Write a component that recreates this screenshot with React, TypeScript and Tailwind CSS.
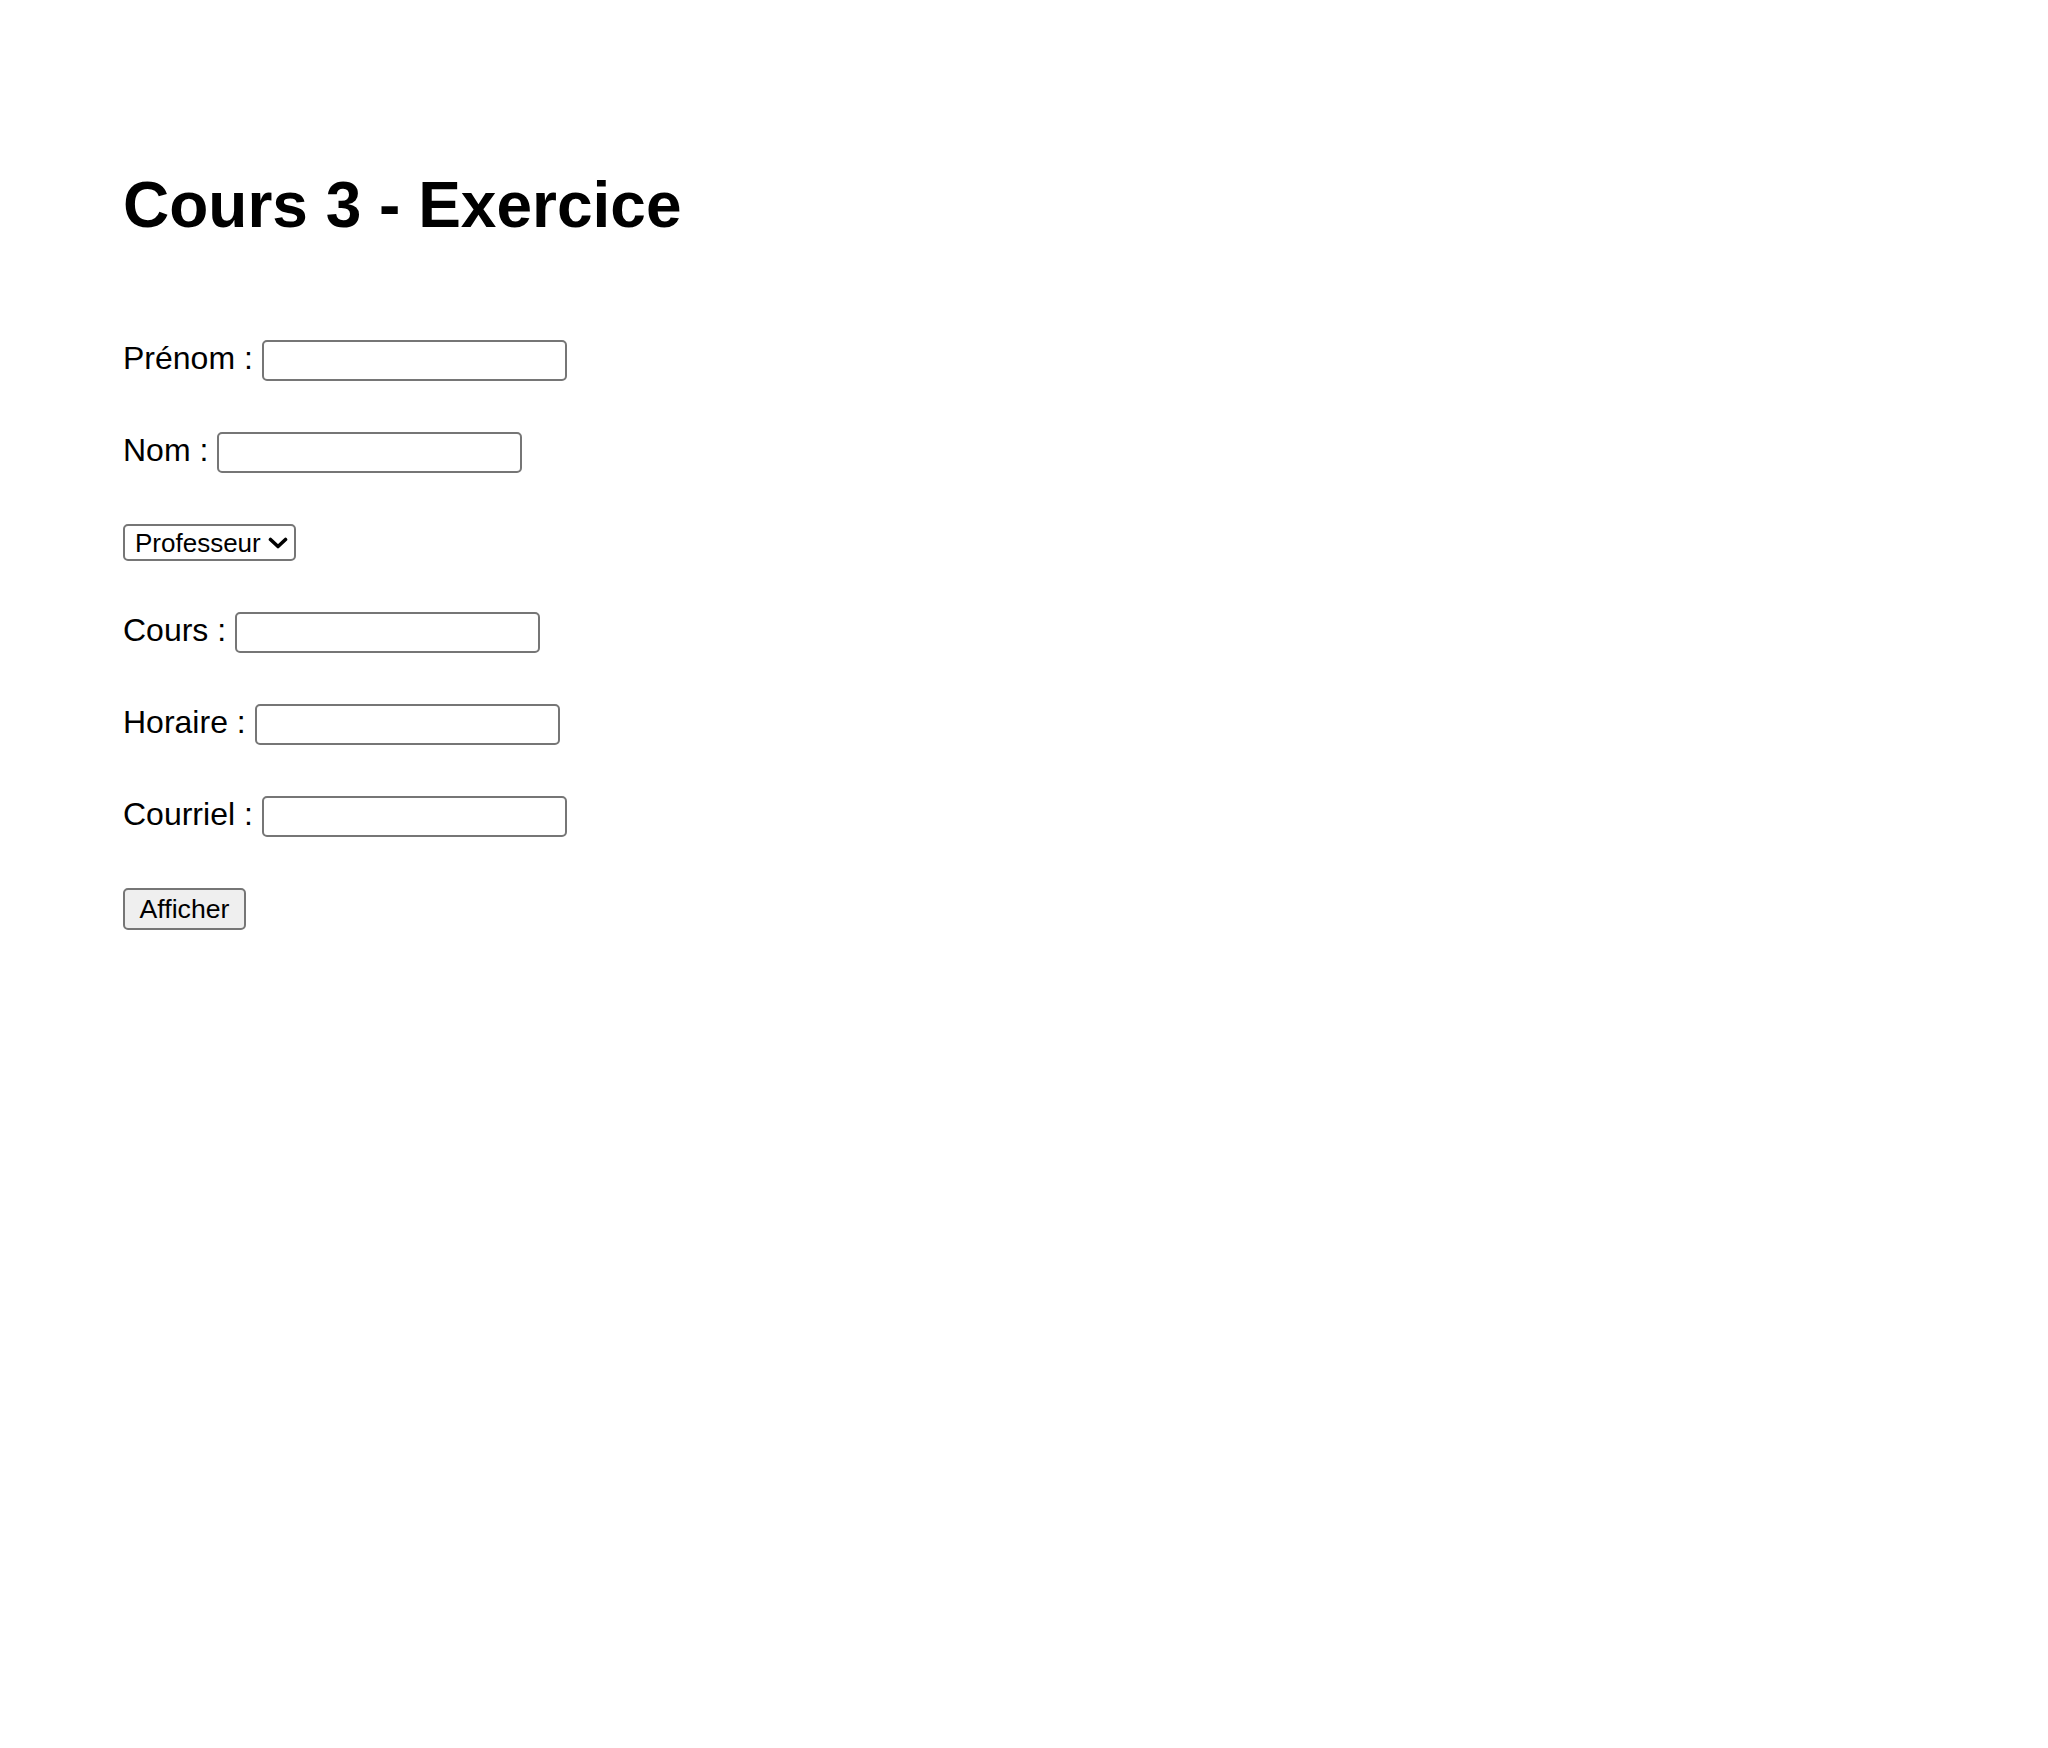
import React from "react";

const fields = ["Prénom", "Nom"];
const fieldsAfter = ["Cours", "Horaire", "Courriel"];

function Field({ label }: { label: string }) {
  return (
    <div className="flex items-start gap-[9px]">
      <label className="text-[32px] leading-[30px] pt-[3px]">{label} :</label>
      <input
        type="text"
        className="h-[41px] w-[305px] rounded-[5px] border-2 border-[#767676] bg-white px-[4px] text-[26.67px] outline-none"
      />
    </div>
  );
}

export default function App() {
  return (
    <div className="min-h-screen bg-white pl-[123px] pt-[168px] text-black font-['Liberation_Sans',Arial,sans-serif]">
      <h1 className="text-[64px] font-bold leading-[74px]">Cours 3 - Exercice</h1>

      <form className="mt-[98px] flex flex-col items-start gap-[51px]" onSubmit={(e) => e.preventDefault()}>
        {fields.map((f) => (
          <Field key={f} label={f} />
        ))}

        {/* select with its own chevron */}
        <div className="relative h-[37px] w-[173px]">
          <select className="h-full w-full appearance-none rounded-[5px] border-2 border-[#767676] bg-white pl-[10px] text-[26px] leading-[30px] outline-none">
            <option>Professeur</option>
            <option>Étudiant</option>
          </select>
          <svg
            className="pointer-events-none absolute left-[145px] top-[13px]"
            width="20"
            height="12"
            viewBox="0 0 20 12"
            fill="none"
          >
            <polyline points="2.5,2.5 10,9.5 17.5,2.5" stroke="#000" strokeWidth="3.6" strokeLinecap="round" strokeLinejoin="round" />
          </svg>
        </div>

        {fieldsAfter.map((f) => (
          <Field key={f} label={f} />
        ))}

        <button
          type="submit"
          className="h-[42px] w-[123px] rounded-[5px] border-2 border-[#767676] bg-[#efefef] text-[26.67px] leading-[30px]"
        >
          Afficher
        </button>
      </form>
    </div>
  );
}
